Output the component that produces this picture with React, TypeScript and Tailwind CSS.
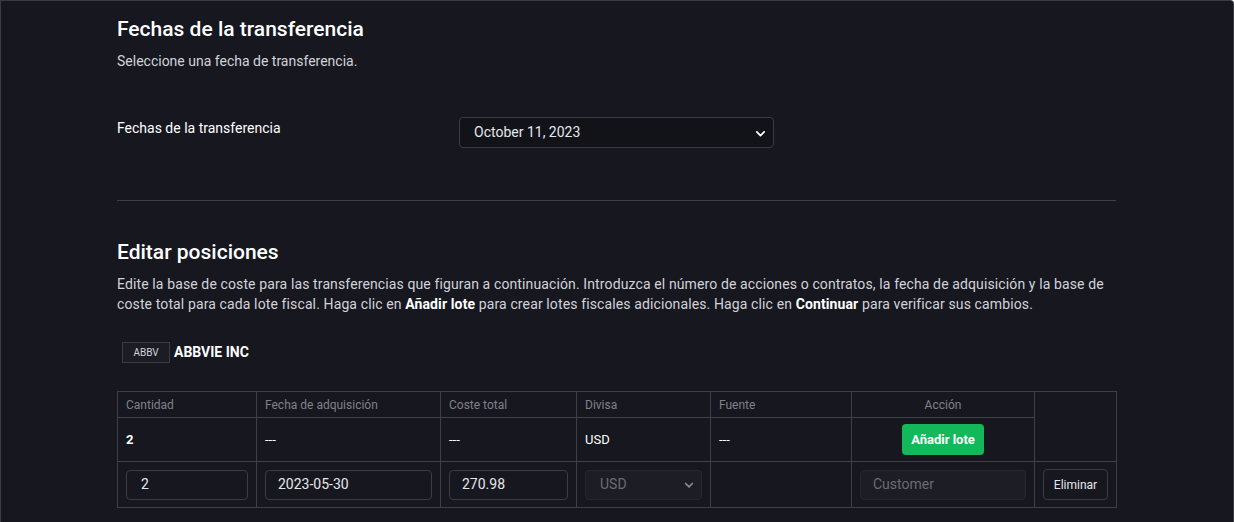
import React from 'react';

const cols = ['w-[139px]', 'w-[184px]', 'w-[136px]', 'w-[134px]', 'w-[141px]', 'w-[183px]', 'w-[82px]'];

const Chevron = ({ className }: { className?: string }) => (
  <svg viewBox="0 0 16 16" className={className} fill="none" stroke="currentColor" strokeWidth="2.2" strokeLinecap="round" strokeLinejoin="round">
    <path d="M3.5 6l4.5 4.5L12.5 6" />
  </svg>
);

const cell = 'border border-[#3e3f48] px-2';

export default function App() {
  return (
    <div className="h-[522px] overflow-hidden bg-[#16171f] border border-b-0 border-[#3a3b45] rounded-tr-[4px] font-['Roboto','Liberation_Sans',sans-serif] text-white">
      <div className="w-[999px] ml-[116px] pt-[14px]">
        {/* Fechas */}
        <h2 className="text-[21px] leading-[28px] font-medium">Fechas de la transferencia</h2>
        <p className="mt-2 text-[14px] leading-5 text-[#d2d3d9]">Seleccione una fecha de transferencia.</p>

        <div className="mt-[46px] flex items-start">
          <div className="w-[342px] text-[14px] leading-5 pt-px">Fechas de la transferencia</div>
          <div className="relative w-[315px] h-[31px] rounded-[4px] border border-[#3a3b45] bg-[#121319] flex items-center pl-[14px] text-[14px] text-[#e6e7ec]">
            October 11, 2023
            <Chevron className="absolute right-[6px] top-[9px] w-[13px] h-[13px] text-white" />
          </div>
        </div>

        <div className="mt-[52px] h-px bg-[#3e3f48]" />

        {/* Editar posiciones */}
        <h2 className="mt-[37px] text-[21px] leading-[28px] font-medium">Editar posiciones</h2>
        <p className="mt-2 text-[14px] leading-5 tracking-[0.12px] text-[#d2d3d9]">
          Edite la base de coste para las transferencias que figuran a continuación. Introduzca el número de acciones o contratos, la fecha de adquisición y la base de coste total para cada lote fiscal. Haga clic en <b className="text-white font-bold">Añadir lote</b> para crear lotes fiscales adicionales. Haga clic en <b className="text-white font-bold">Continuar</b> para verificar sus cambios.
        </p>

        <div className="mt-[28px] ml-[5px] flex items-center gap-[4px]">
          <span className="w-[48px] h-[21px] flex items-center justify-center border border-[#3a3b45] bg-[#1b1c24] text-[10px] text-[#d2d3d9]">ABBV</span>
          <span className="text-[14px] font-bold">ABBVIE INC</span>
        </div>

        {/* Table */}
        <table className="mt-[28px] w-[999px] table-fixed border-collapse text-[14px]">
          <colgroup>
            {cols.map((c, i) => <col key={i} className={c} />)}
          </colgroup>
          <tbody>
            <tr className="h-[26px] text-[12px] text-[#80818b]">
              <td className={`${cell} text-left`}>Cantidad</td>
              <td className={`${cell} text-left`}>Fecha de adquisición</td>
              <td className={`${cell} text-left`}>Coste total</td>
              <td className={`${cell} text-left`}>Divisa</td>
              <td className={`${cell} text-left`}>Fuente</td>
              <td className={`${cell} text-center`}>Acción</td>
              <td rowSpan={2} className={cell} />
            </tr>
            <tr className="h-[44px] text-[13px]">
              <td className={`${cell} font-bold`}>2</td>
              <td className={cell}>---</td>
              <td className={cell}>---</td>
              <td className={cell}>USD</td>
              <td className={cell}>---</td>
              <td className={`${cell} text-center`}>
                <button className="h-[31px] w-[82px] rounded-[4px] bg-[#12b85a] text-white text-[13px] font-bold">Añadir lote</button>
              </td>
            </tr>
            <tr className="h-[46px]">
              <td className={cell}>
                <div className="h-[30px] rounded-[4px] border border-[#3a3b45] flex items-center px-[14px] text-[#e6e7ec]">2</div>
              </td>
              <td className={cell}>
                <div className="h-[30px] rounded-[4px] border border-[#3a3b45] flex items-center px-3 text-[#e6e7ec]">2023-05-30</div>
              </td>
              <td className={cell}>
                <div className="h-[30px] rounded-[4px] border border-[#3a3b45] flex items-center px-3 text-[#e6e7ec]">270.98</div>
              </td>
              <td className={cell}>
                <div className="relative h-[30px] rounded-[4px] border border-[#262730] bg-[#1c1d25] flex items-center px-[14px] text-[#6b6c75]">
                  USD
                  <Chevron className="absolute right-[6px] top-[8px] w-[12px] h-[12px] text-[#8a8b94]" />
                </div>
              </td>
              <td className={cell} />
              <td className={cell}>
                <div className="h-[30px] rounded-[4px] border border-[#262730] bg-[#1c1d25] flex items-center px-3 text-[#6b6c75]">Customer</div>
              </td>
              <td className={cell}>
                <button className="h-[31px] w-[65px] rounded-[4px] border border-[#3a3b45] text-[12px] text-[#e6e7ec]">Eliminar</button>
              </td>
            </tr>
          </tbody>
        </table>
      </div>
    </div>
  );
}
